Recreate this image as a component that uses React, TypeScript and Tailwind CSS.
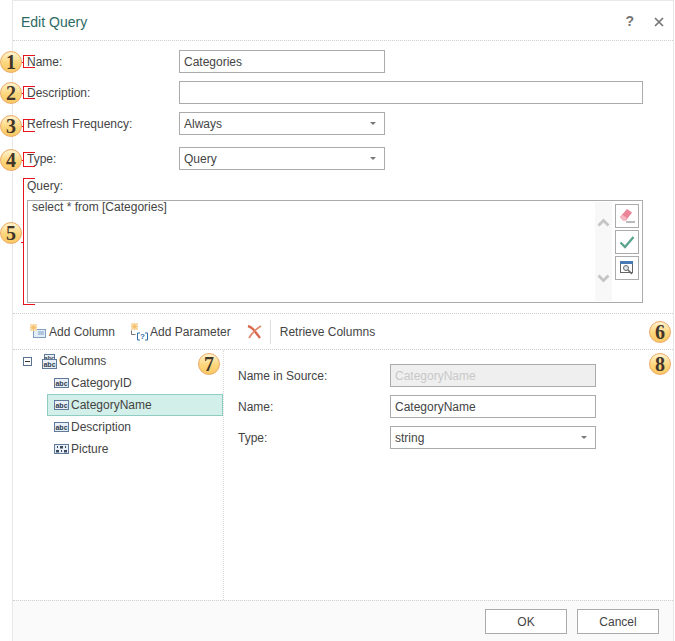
import React from 'react'

const Badge = ({ n, className }: { n: number; className: string }) => (
  <div
    className={`absolute w-[22px] h-[22px] rounded-full border border-[#eeaa66] bg-[linear-gradient(#fff3cf,#fcd67c_55%,#f9c864)] flex items-center justify-center text-[20px] leading-none font-bold text-[#42352a] font-[Liberation_Serif,serif] ${className}`}
  >
    {n}
  </div>
)

const Bracket = ({ className }: { className: string }) => (
  <div className={`absolute w-3 border-l border-t border-b border-[#e8141c] ${className}`}>
    <div className="absolute left-[-3px] top-1/2 w-[3px] h-px bg-[#e8141c]" />
  </div>
)

const Field = ({ value, className = '', disabled = false }: { value?: string; className?: string; disabled?: boolean }) => (
  <div
    className={`h-[23px] border border-[#ababab] flex items-center px-[4px] text-xs ${disabled ? 'bg-[#efefef] text-[#c8c8c8]' : 'bg-white text-[#444]'} ${className}`}
  >
    {value}
  </div>
)

const Select = ({ value, className = '' }: { value: string; className?: string }) => (
  <div className={`h-[23px] border border-[#ababab] bg-white flex items-center justify-between pl-[4px] pr-[8px] text-xs text-[#444] ${className}`}>
    <span>{value}</span>
    <div className="w-0 h-0 border-x-[3px] border-x-transparent border-t-[3px] border-t-[#777]" />
  </div>
)

const FormRow = ({ label, children, className = '' }: { label: string; children: React.ReactNode; className?: string }) => (
  <div className={`flex items-center ${className}`}>
    <div className="w-[152px] text-xs text-[#444]">{label}</div>
    {children}
  </div>
)

const ColumnIcon = ({ binary = false }: { binary?: boolean }) => (
  <svg width="15" height="10" viewBox="0 0 15 10" className="shrink-0">
    <rect x="0.5" y="0.5" width="14" height="9" fill="#e9eff6" stroke="#5f7a9a" />
    {binary ? (
      <g fill="none" stroke="#3a4a5c">
        <path d="M3.5 2v2M11.5 2v2M7.5 6v2" />
        <rect x="6.5" y="2.5" width="2" height="1.5" />
        <rect x="2.5" y="6.5" width="2" height="1.5" />
        <rect x="10.5" y="6.5" width="2" height="1.5" />
      </g>
    ) : (
      <text x="7.5" y="7.6" textAnchor="middle" fontSize="7" fontWeight="700" fill="#2f3e50" fontFamily="'Liberation Sans', sans-serif">
        abc
      </text>
    )}
  </svg>
)

const TreeItem = ({ label, binary, selected }: { label: string; binary?: boolean; selected?: boolean }) => (
  <div className={`h-[22px] flex items-center gap-[2px] pl-[6px] text-xs text-[#444] border ${selected ? 'bg-[#d3efe9] border-[#8fcdc3]' : 'border-transparent'}`}>
    <ColumnIcon binary={binary} />
    <span>{label}</span>
  </div>
)

const Spark = () => (
  <g>
    <rect x="0" y="0" width="7" height="7" fill="#fae3bb" />
    <path d="M3.5 0v7M0 3.5h7M0.5 0.5l6 6M6.5 0.5l-6 6" stroke="#f6cf8f" />
    <circle cx="3.5" cy="3.5" r="2" fill="#f5c070" />
  </g>
)

const SideButton = ({ children }: { children: React.ReactNode }) => (
  <div className="w-6 h-6 border border-[#ababab] bg-white flex items-center justify-center">{children}</div>
)

export default function App() {
  return (
    <div className="relative w-[675px] h-[641px] bg-white pl-3 pr-[1px] overflow-hidden font-[Liberation_Sans,Arial,sans-serif]">
      <div className="h-full flex flex-col border-x border-t border-[#e8e8e8]">
        <header className="h-[40px] shrink-0 flex items-center justify-between pl-2 pr-[8px] pt-[2px] border-b border-dotted border-[#cfcfcf]">
          <span className="text-sm text-[#2c6a62]">Edit Query</span>
          <div className="flex items-center gap-[20px] pr-[1px]">
            <span className="text-[14px] font-bold text-[#757575]">?</span>
            <svg width="10" height="10" viewBox="0 0 10 10">
              <path d="M1 1l8 8M9 1l-8 8" stroke="#757575" strokeWidth="1.7" />
            </svg>
          </div>
        </header>

        <section className="shrink-0 pl-[14px] pr-[30px] pt-[9px] h-[273px] border-b border-dotted border-[#cfcfcf]">
          <FormRow label="Name:">
            <Field value="Categories" className="w-[206px]" />
          </FormRow>
          <FormRow label="Description:" className="mt-2">
            <Field className="flex-1" />
          </FormRow>
          <FormRow label="Refresh Frequency:" className="mt-2">
            <Select value="Always" className="w-[206px]" />
          </FormRow>
          <FormRow label="Type:" className="mt-3">
            <Select value="Query" className="w-[206px]" />
          </FormRow>
          <div className="mt-[5px] mb-[3px] h-[22px] flex items-center text-xs text-[#444]">Query:</div>
          <div className="h-[103px] border border-[#ababab] flex">
            <div className="flex-1 px-[4px] text-xs leading-[13px] text-[#444]">select * from [Categories]</div>
            <div className="w-[17px] my-[1px] bg-[#f8f8f8] flex flex-col items-center justify-between pt-[16px] pb-[18px] -translate-x-[1px]">
              <svg width="13" height="9" viewBox="0 0 13 9">
                <path d="M1.5 7.5L6.5 2.5l5 5" fill="none" stroke="#c4c4c4" strokeWidth="2.8" />
              </svg>
              <svg width="13" height="9" viewBox="0 0 13 9">
                <path d="M1.5 1.5l5 5 5-5" fill="none" stroke="#c4c4c4" strokeWidth="2.8" />
              </svg>
            </div>
            <div className="w-[29px] pl-[2px] pt-[3px] flex flex-col gap-[2px]">
              <SideButton>
                <svg width="17" height="16" viewBox="0 0 17 16">
                  <path d="M1 9l7-8 5 3.5-6 8H4z" fill="#ea8496" />
                  <path d="M1 9l2-2.4 5 3.5-1.800 2.400H4z" fill="#f4b7c1" />
                  <path d="M7 14h9" stroke="#777" />
                </svg>
              </SideButton>
              <SideButton>
                <svg width="16" height="14" viewBox="0 0 16 14">
                  <path d="M1.5 7.5l4.500 4.500L14.500 2" fill="none" stroke="#5da48f" strokeWidth="2.400" />
                </svg>
              </SideButton>
              <SideButton>
                <svg width="14" height="14" viewBox="0 0 14 14">
                  <rect x="0.5" y="0.5" width="12" height="11" fill="#fff" stroke="#666" />
                  <rect x="0" y="0" width="13" height="3" fill="#4a7ab5" />
                  <circle cx="6" cy="7" r="2.5" fill="#dfe7ee" stroke="#666" />
                  <path d="M8 9l4 4" stroke="#666" strokeWidth="1.6" />
                </svg>
              </SideButton>
            </div>
          </div>
        </section>

        <nav className="h-[36px] shrink-0 flex items-center pl-[17px] text-xs text-[#444] border-b border-dotted border-[#cfcfcf]">
          <svg width="16" height="15" viewBox="0 0 16 15" className="mr-[3px]">
            <rect x="3.5" y="5.500" width="12" height="8" fill="#e3edf7" stroke="#7f9fc2" />
            <path d="M8 8h6M8 10h6" stroke="#7f9fc2" />
            <Spark />
          </svg>
          <span>Add Column</span>
          <svg width="17" height="18" viewBox="0 0 17 18" className="ml-[16px] mr-[2px] mt-[1px]">
            <Spark />
            <path d="M.5 7.500v4h4" fill="none" stroke="#777" />
            <path d="M9 10H6.500v7H9M14 10h2.500v7H14" fill="none" stroke="#2e6ca8" />
            <text x="11.5" y="16" textAnchor="middle" fontSize="8" fontWeight="700" fill="#2e6ca8" fontFamily="'Liberation Sans', sans-serif">?</text>
          </svg>
          <span>Add Parameter</span>
          <svg width="15" height="14" viewBox="0 0 15 14" className="ml-[16px]">
            <path d="M1 1c4 1 6 4 12 12" fill="none" stroke="#d9684c" strokeWidth="2.4" />
            <path d="M14 1C9 4 5 8 2 13" fill="none" stroke="#e08a70" strokeWidth="1.8" />
          </svg>
          <div className="w-px h-[24px] bg-[#dcdcdc] ml-[8px] mr-[9px]" />
          <span>Retrieve Columns</span>
        </nav>

        <main className="flex-1 flex min-h-0">
          <aside className="w-[211px] shrink-0 border-r border-dotted border-[#dcdcdc] pl-[10px]">
            <div className="h-[22px] flex items-center text-xs text-[#444]">
              <div className="w-[9px] h-[9px] border border-[#5a7391] flex items-center justify-center mr-[10px]">
                <div className="w-[5px] h-px bg-[#333]" />
              </div>
              <svg width="15" height="15" viewBox="0 0 15 15" className="mr-[2px]">
                <rect x="2.5" y="0.5" width="10" height="6" fill="#e9eff6" stroke="#5f7a9a" />
                <text x="7.5" y="5.6" textAnchor="middle" fontSize="6" fontWeight="700" fill="#2f3e50" fontFamily="'Liberation Sans', sans-serif">abc</text>
                <rect x="0.5" y="5.5" width="14" height="9" fill="#e9eff6" stroke="#5f7a9a" />
                <text x="7.5" y="12.6" textAnchor="middle" fontSize="7" fontWeight="700" fill="#2f3e50" fontFamily="'Liberation Sans', sans-serif">abc</text>
              </svg>
              <span>Columns</span>
            </div>
            <div className="ml-[24px]">
              <TreeItem label="CategoryID" />
              <TreeItem label="CategoryName" selected />
              <TreeItem label="Description" />
              <TreeItem label="Picture" binary />
            </div>
          </aside>
          <div className="flex-1 pl-[14px] pt-[14px]">
            <div className="flex items-center">
              <div className="w-[152px] text-xs text-[#444]">Name in Source:</div>
              <Field value="CategoryName" disabled className="w-[206px]" />
            </div>
            <div className="flex items-center mt-2">
              <div className="w-[152px] text-xs text-[#444]">Name:</div>
              <Field value="CategoryName" className="w-[206px]" />
            </div>
            <div className="flex items-center mt-2">
              <div className="w-[152px] text-xs text-[#444]">Type:</div>
              <Select value="string" className="w-[206px]" />
            </div>
          </div>
        </main>

        <footer className="h-[41px] shrink-0 bg-[#fafafa] border-t border-dotted border-[#cfcfcf] flex items-start justify-end gap-[10px] pt-[8px] pr-[14px]">
          <button className="w-[82px] h-[25px] border border-[#ababab] bg-white text-xs text-[#444]">OK</button>
          <button className="w-[82px] h-[25px] border border-[#ababab] bg-white text-xs text-[#444]">Cancel</button>
        </footer>
      </div>

      <Bracket className="left-[23px] top-[55px] h-[13px]" />
      <Bracket className="left-[23px] top-[86px] h-[13px]" />
      <Bracket className="left-[23px] top-[119px] h-[13px]" />
      <Bracket className="left-[23px] top-[152px] h-[15px]" />
      <Bracket className="left-[23px] top-[178px] h-[127px]" />
      <Badge n={1} className="left-0 top-[51px]" />
      <Badge n={2} className="left-0 top-[82px]" />
      <Badge n={3} className="left-0 top-[115px]" />
      <Badge n={4} className="left-0 top-[149px]" />
      <Badge n={5} className="left-0 top-[222px]" />
      <Badge n={6} className="left-[649px] top-[321px]" />
      <Badge n={7} className="left-[198px] top-[353px]" />
      <Badge n={8} className="left-[649px] top-[353px]" />
    </div>
  )
}
